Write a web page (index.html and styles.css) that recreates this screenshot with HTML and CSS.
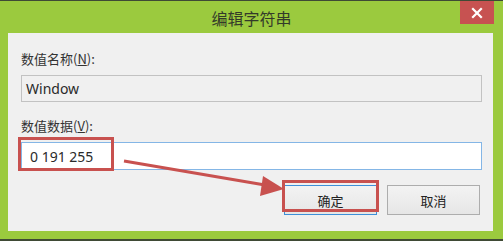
FILE: index.html
```html
<!DOCTYPE html>
<html lang="zh-CN">
<head>
<meta charset="utf-8">
<title>编辑字符串</title>
<link rel="stylesheet" href="styles.css">
</head>
<body>
<div class="window">
  <div class="titlebar">
    <div class="spacer"></div>
    <div class="title">编辑字符串</div>
    <div class="controls">
      <div class="close">
        <svg width="12" height="12" viewBox="0 0 12 12"><path d="M2 2 L10 10 M10 2 L2 10" stroke="#fff" stroke-width="2.2" stroke-linecap="square"/></svg>
      </div>
    </div>
  </div>
  <div class="panel">
    <div class="label">数值名称(<u>N</u>):</div>
    <div class="field field-disabled">Window</div>
    <div class="label label-second">数值数据(<u>V</u>):</div>
    <div class="field field-active"><span class="value">0 191 255</span></div>
    <div class="buttons">
      <div class="btn btn-default">确定</div>
      <div class="btn">取消</div>
    </div>
  </div>
  <svg class="annot" width="503" height="241" viewBox="0 0 503 241">
    <rect x="19.5" y="138.5" width="93" height="31" fill="none" stroke="#c8514f" stroke-width="3"/>
    <rect x="283.5" y="181.5" width="94" height="29" fill="none" stroke="#c8514f" stroke-width="3"/>
    <line x1="124" y1="161" x2="265" y2="185" stroke="#c8514f" stroke-width="3"/>
    <polygon points="284,189 263,176 260,196" fill="#c8514f"/>
  </svg>
</div>
</body>
</html>
```

FILE: styles.css
```css
html, body {
  margin: 0;
  padding: 0;
  background: #9bca3e;
}
.window {
  position: relative;
  width: 503px;
  height: 241px;
  box-sizing: border-box;
  background: #9bca3e;
  border-top: 1px solid #3f4a35;
  border-bottom: 2px solid #3f4a35;
  display: flex;
  flex-direction: column;
  font-family: "Noto Sans", "Noto Sans CJK SC", sans-serif;
}
.titlebar {
  height: 32px;
  display: grid;
  grid-template-columns: 1fr auto 1fr;
  align-items: start;
}
.title {
  font-family: "Noto Sans CJK SC", sans-serif;
  font-size: 16px;
  line-height: 20px;
  color: #333a2a;
  margin-top: 7px;
}
.controls {
  display: flex;
  justify-content: flex-end;
  padding-right: 9px;
}
.close {
  width: 34px;
  height: 23px;
  background: #c75251;
  display: flex;
  align-items: center;
  justify-content: center;
}
.close svg { display: block; }
.panel {
  margin: 0 10px 0 8px;
  height: 198px;
  background: #f0f0f0;
  padding: 18px 11px 0 13px;
  box-sizing: border-box;
  display: flex;
  flex-direction: column;
}
.label {
  font-family: "Noto Sans CJK SC", sans-serif;
  font-size: 13px;
  line-height: 16px;
  color: #333;
}
.label-second { margin-top: 16px; }
.field {
  margin-top: 8px;
  box-sizing: border-box;
  display: flex;
  align-items: center;
  font-size: 14px;
  color: #2a2a2a;
}
.field-disabled {
  height: 27px;
  border: 1px solid #c2c2c2;
  background: #f0f0f0;
  padding-left: 4px;
}
.field-active {
  height: 28px;
  border: 1px solid #84b6e6;
  background: #fff;
  padding-left: 8px;
}
.value { padding-top: 0; }
.buttons {
  margin-top: 15px;
  margin-right: 2px;
  display: flex;
  justify-content: flex-end;
  gap: 10px;
}
.btn {
  width: 93px;
  height: 30px;
  box-sizing: border-box;
  border: 1px solid #adadad;
  background: linear-gradient(#f3f3f3, #e6e6e6);
  display: flex;
  align-items: center;
  justify-content: center;
  font-family: "Noto Sans CJK SC", sans-serif;
  font-size: 13px;
  color: #222;
}
.btn-default {
  border: 1px solid #3f8fd8;
}
.annot {
  position: absolute;
  left: 0;
  top: -1px;
  pointer-events: none;
}
```
